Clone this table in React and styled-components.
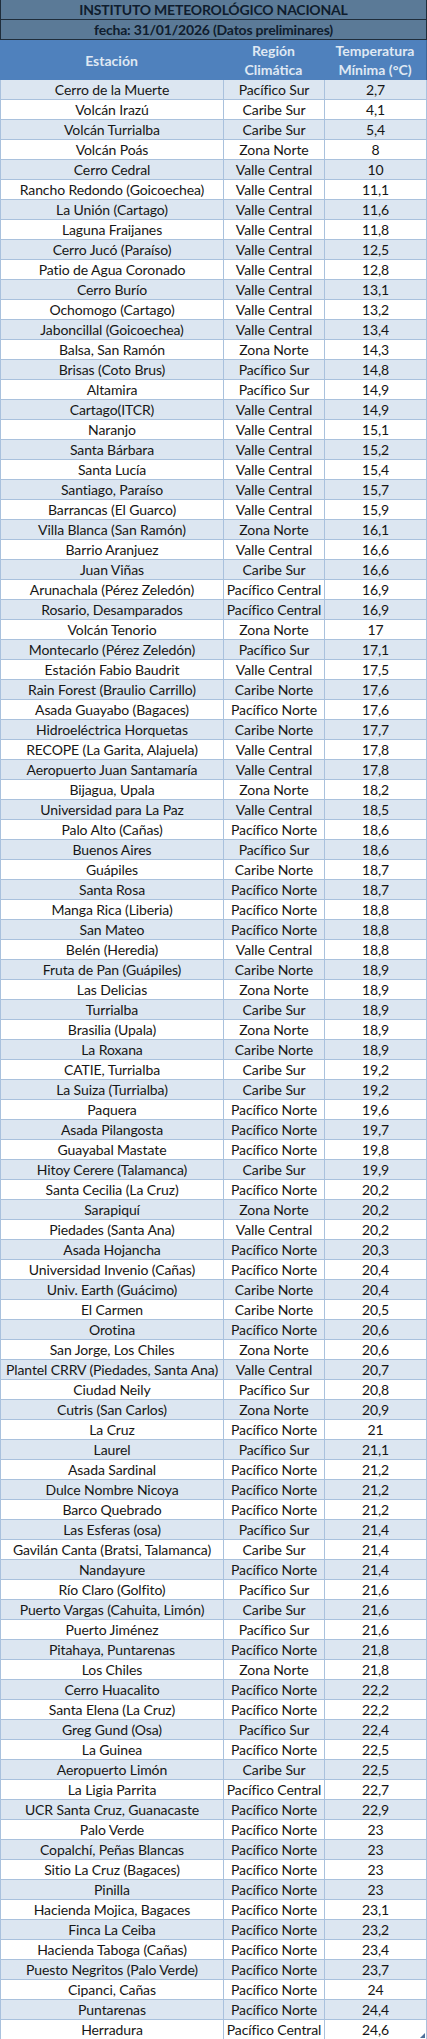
import styled, { createGlobalStyle } from "styled-components";

const GlobalStyle = createGlobalStyle`
  body {
    margin: 0;
    background: #fff;
    font-family: Lato, "Noto Sans", "Liberation Sans", sans-serif;
  }
`;

const stations = [
  ["Cerro de la Muerte", "Pacífico Sur", "2,7"],
  ["Volcán Irazú", "Caribe Sur", "4,1"],
  ["Volcán Turrialba", "Caribe Sur", "5,4"],
  ["Volcán Poás", "Zona Norte", "8"],
  ["Cerro Cedral", "Valle Central", "10"],
  ["Rancho Redondo (Goicoechea)", "Valle Central", "11,1"],
  ["La Unión (Cartago)", "Valle Central", "11,6"],
  ["Laguna Fraijanes", "Valle Central", "11,8"],
  ["Cerro Jucó (Paraíso)", "Valle Central", "12,5"],
  ["Patio de Agua Coronado", "Valle Central", "12,8"],
  ["Cerro Burío", "Valle Central", "13,1"],
  ["Ochomogo (Cartago)", "Valle Central", "13,2"],
  ["Jaboncillal (Goicoechea)", "Valle Central", "13,4"],
  ["Balsa, San Ramón", "Zona Norte", "14,3"],
  ["Brisas (Coto Brus)", "Pacífico Sur", "14,8"],
  ["Altamira", "Pacífico Sur", "14,9"],
  ["Cartago(ITCR)", "Valle Central", "14,9"],
  ["Naranjo", "Valle Central", "15,1"],
  ["Santa Bárbara", "Valle Central", "15,2"],
  ["Santa Lucía", "Valle Central", "15,4"],
  ["Santiago, Paraíso", "Valle Central", "15,7"],
  ["Barrancas (El Guarco)", "Valle Central", "15,9"],
  ["Villa Blanca (San Ramón)", "Zona Norte", "16,1"],
  ["Barrio Aranjuez", "Valle Central", "16,6"],
  ["Juan Viñas", "Caribe Sur", "16,6"],
  ["Arunachala (Pérez Zeledón)", "Pacífico Central", "16,9"],
  ["Rosario, Desamparados", "Pacífico Central", "16,9"],
  ["Volcán Tenorio", "Zona Norte", "17"],
  ["Montecarlo (Pérez Zeledón)", "Pacífico Sur", "17,1"],
  ["Estación Fabio Baudrit", "Valle Central", "17,5"],
  ["Rain Forest (Braulio Carrillo)", "Caribe Norte", "17,6"],
  ["Asada Guayabo (Bagaces)", "Pacífico Norte", "17,6"],
  ["Hidroeléctrica Horquetas", "Caribe Norte", "17,7"],
  ["RECOPE (La Garita, Alajuela)", "Valle Central", "17,8"],
  ["Aeropuerto Juan Santamaría", "Valle Central", "17,8"],
  ["Bijagua, Upala", "Zona Norte", "18,2"],
  ["Universidad para La Paz", "Valle Central", "18,5"],
  ["Palo Alto (Cañas)", "Pacífico Norte", "18,6"],
  ["Buenos Aires", "Pacífico Sur", "18,6"],
  ["Guápiles", "Caribe Norte", "18,7"],
  ["Santa Rosa", "Pacífico Norte", "18,7"],
  ["Manga Rica (Liberia)", "Pacífico Norte", "18,8"],
  ["San Mateo", "Pacífico Norte", "18,8"],
  ["Belén (Heredia)", "Valle Central", "18,8"],
  ["Fruta de Pan (Guápiles)", "Caribe Norte", "18,9"],
  ["Las Delicias", "Zona Norte", "18,9"],
  ["Turrialba", "Caribe Sur", "18,9"],
  ["Brasilia (Upala)", "Zona Norte", "18,9"],
  ["La Roxana", "Caribe Norte", "18,9"],
  ["CATIE, Turrialba", "Caribe Sur", "19,2"],
  ["La Suiza (Turrialba)", "Caribe Sur", "19,2"],
  ["Paquera", "Pacífico Norte", "19,6"],
  ["Asada Pilangosta", "Pacífico Norte", "19,7"],
  ["Guayabal Mastate", "Pacífico Norte", "19,8"],
  ["Hitoy Cerere (Talamanca)", "Caribe Sur", "19,9"],
  ["Santa Cecilia (La Cruz)", "Pacífico Norte", "20,2"],
  ["Sarapiquí", "Zona Norte", "20,2"],
  ["Piedades (Santa Ana)", "Valle Central", "20,2"],
  ["Asada Hojancha", "Pacífico Norte", "20,3"],
  ["Universidad Invenio (Cañas)", "Pacífico Norte", "20,4"],
  ["Univ. Earth (Guácimo)", "Caribe Norte", "20,4"],
  ["El Carmen", "Caribe Norte", "20,5"],
  ["Orotina", "Pacífico Norte", "20,6"],
  ["San Jorge, Los Chiles", "Zona Norte", "20,6"],
  ["Plantel CRRV (Piedades, Santa Ana)", "Valle Central", "20,7"],
  ["Ciudad Neily", "Pacífico Sur", "20,8"],
  ["Cutris (San Carlos)", "Zona Norte", "20,9"],
  ["La Cruz", "Pacífico Norte", "21"],
  ["Laurel", "Pacífico Sur", "21,1"],
  ["Asada Sardinal", "Pacífico Norte", "21,2"],
  ["Dulce Nombre Nicoya", "Pacífico Norte", "21,2"],
  ["Barco Quebrado", "Pacífico Norte", "21,2"],
  ["Las Esferas (osa)", "Pacífico Sur", "21,4"],
  ["Gavilán Canta (Bratsi, Talamanca)", "Caribe Sur", "21,4"],
  ["Nandayure", "Pacífico Norte", "21,4"],
  ["Río Claro (Golfito)", "Pacífico Sur", "21,6"],
  ["Puerto Vargas (Cahuita, Limón)", "Caribe Sur", "21,6"],
  ["Puerto Jiménez", "Pacífico Sur", "21,6"],
  ["Pitahaya, Puntarenas", "Pacífico Norte", "21,8"],
  ["Los Chiles", "Zona Norte", "21,8"],
  ["Cerro Huacalito", "Pacífico Norte", "22,2"],
  ["Santa Elena (La Cruz)", "Pacífico Norte", "22,2"],
  ["Greg Gund (Osa)", "Pacífico Sur", "22,4"],
  ["La Guinea", "Pacífico Norte", "22,5"],
  ["Aeropuerto Limón", "Caribe Sur", "22,5"],
  ["La Ligia Parrita", "Pacífico Central", "22,7"],
  ["UCR Santa Cruz, Guanacaste", "Pacífico Norte", "22,9"],
  ["Palo Verde", "Pacífico Norte", "23"],
  ["Copalchí, Peñas Blancas", "Pacífico Norte", "23"],
  ["Sitio La Cruz (Bagaces)", "Pacífico Norte", "23"],
  ["Pinilla", "Pacífico Norte", "23"],
  ["Hacienda Mojica, Bagaces", "Pacífico Norte", "23,1"],
  ["Finca La Ceiba", "Pacífico Norte", "23,2"],
  ["Hacienda Taboga (Cañas)", "Pacífico Norte", "23,4"],
  ["Puesto Negritos (Palo Verde)", "Pacífico Norte", "23,7"],
  ["Cipanci, Cañas", "Pacífico Norte", "24"],
  ["Puntarenas", "Pacífico Norte", "24,4"],
  ["Herradura", "Pacífico Central", "24,6"],
];

const Sheet = styled.div`
  width: 427px;
  position: relative;
`;

const TitleBar = styled.div`
  height: 20px;
  box-sizing: border-box;
  display: flex;
  align-items: center;
  justify-content: center;
  background-color: #5b7a97;
  color: #0f1d2e;
  font-size: 14px;
  font-weight: 700;
  letter-spacing: -0.2px;
  border-left: 1px solid #1f2d3b;
  border-right: 1px solid #1f2d3b;
  border-bottom: 1px solid #1f2d3b;
`;

const HeaderRow = styled.div`
  display: grid;
  grid-template-columns: 223px 101px 1fr;
  height: 40px;
  background-color: #4f81bd;
  color: #dfe8f3;
  font-size: 14px;
  font-weight: 700;
  line-height: 19px;
  border-right: 1px solid #3c6597;
`;

const HeaderCell = styled.div`
  display: flex;
  flex-direction: column;
  align-items: center;
  justify-content: center;
  text-align: center;
`;

const Row = styled.div`
  display: grid;
  grid-template-columns: 223px 101px 1fr;
  height: 20px;
  box-sizing: border-box;
  background-color: ${(p) => (p.$shaded ? "#dce6f1" : "#ffffff")};
  border-bottom: 1px solid #a9c1dd;
  border-left: 1px solid #a9c1dd;
  border-right: 1px solid #a9c1dd;
`;

const Cell = styled.div`
  display: flex;
  align-items: center;
  justify-content: center;
  font-size: 14px;
  color: #161616;
  letter-spacing: -0.1px;
  white-space: nowrap;
  border-right: ${(p) => (p.$last ? "none" : "1px solid #a9c1dd")};
`;

const Handle = styled.svg`
  position: absolute;
  right: 2px;
  bottom: 2px;
  width: 5px;
  height: 5px;
`;

export default function App() {
  return (
    <>
      <GlobalStyle />
      <Sheet>
        <TitleBar>INSTITUTO METEOROLÓGICO NACIONAL</TitleBar>
        <TitleBar>fecha: 31/01/2026 (Datos preliminares)</TitleBar>
        <HeaderRow>
          <HeaderCell>Estación</HeaderCell>
          <HeaderCell>
            <span>Región</span>
            <span>Climática</span>
          </HeaderCell>
          <HeaderCell>
            <span>Temperatura</span>
            <span>Mínima (°C)</span>
          </HeaderCell>
        </HeaderRow>
        {stations.map(([name, region, temp], i) => (
          <Row key={name} $shaded={i % 2 === 0}>
            <Cell>{name}</Cell>
            <Cell>{region}</Cell>
            <Cell $last>{temp}</Cell>
          </Row>
        ))}
        <Handle viewBox="0 0 5 5">
          <polygon points="5,0 5,5 0,5" fill="#4f6f9a" />
        </Handle>
      </Sheet>
    </>
  );
}
